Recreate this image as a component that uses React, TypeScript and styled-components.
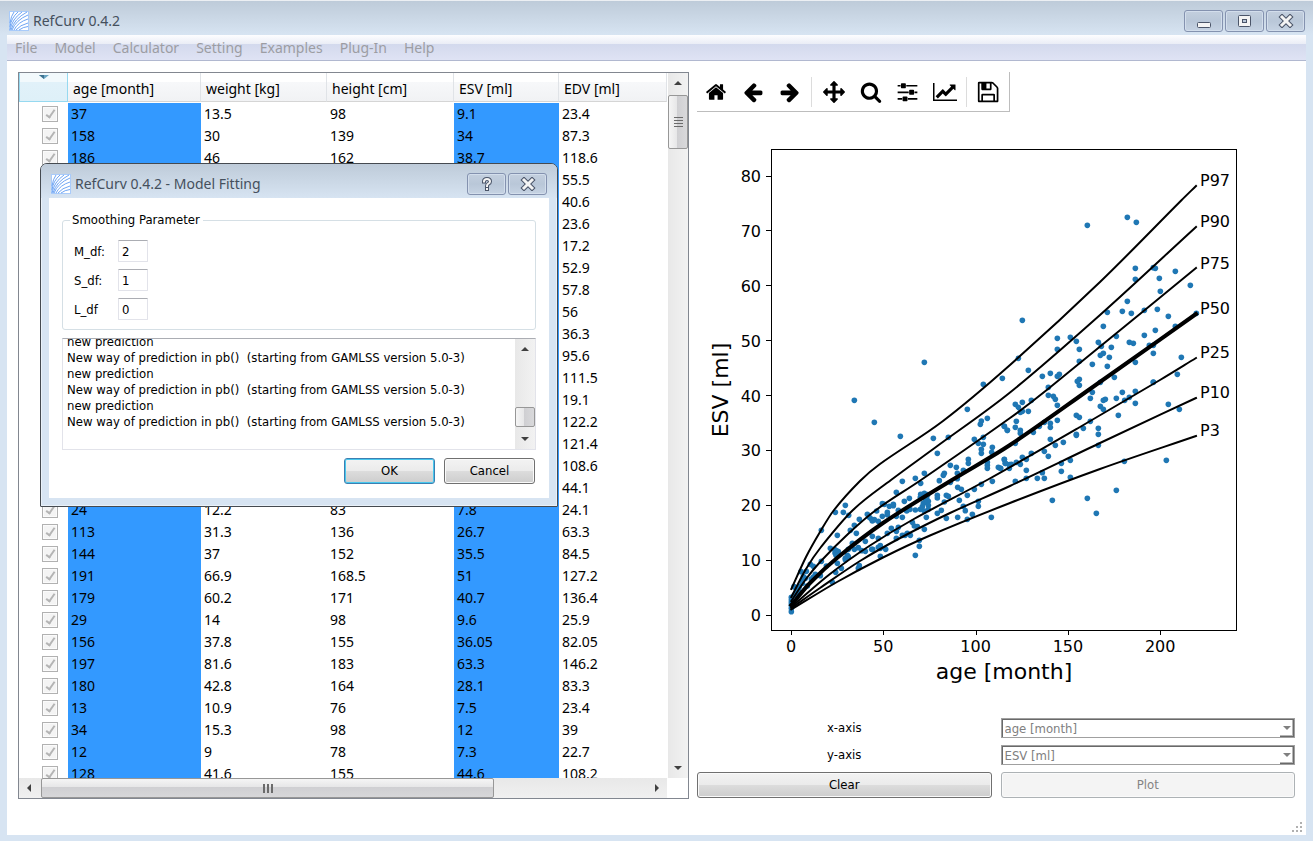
import React from "react";
import styled, { createGlobalStyle, css } from "styled-components";

const uiFont = `"Noto Sans", "Open Sans", sans-serif`;
const smallFont = `"DejaVu Sans Condensed", "Noto Sans", sans-serif`;

const GlobalStyle = createGlobalStyle`
  *, *::before, *::after { box-sizing: border-box; }
  body { margin: 0; background: #d7e4f2; font-family: ${uiFont}; font-size: 14px; color: #000; }
  button, input, select { font: inherit; color: inherit; margin: 0; }
`;

/* ---------- window frame ---------- */

const Window = styled.div`
  position: relative;
  display: flex;
  flex-direction: column;
  height: 100vh;
  min-height: 600px;
  padding: 0 7px 6px;
  background: #d7e4f2;
  border-top: 1px solid #eceff3;
  box-shadow: inset 0 1px 0 #b4bfcb;
  overflow: hidden;
`;

const TitleBar = styled.header<{ $dialog?: boolean }>`
  display: flex;
  align-items: center;
  flex: none;
  height: 34px;
  margin: 0 ${(p) => (p.$dialog ? -8 : -7)}px;
  padding: ${(p) => (p.$dialog ? "6px 10px 0 10px" : "6px 8px 0 9px")};
  gap: 4px;
  color: #45505d;
  background: linear-gradient(#becbd9, #d7e4f2);
  border-radius: ${(p) => (p.$dialog ? "6px 6px 0 0" : "0")};
`;

const TitleText = styled.h1`
  flex: 1;
  margin: 0;
  font-size: 14px;
  font-weight: 400;
  line-height: 20px;
`;

const FrameButtons = styled.div`
  display: flex;
  gap: 2px;
`;

const FrameButton = styled.button`
  display: flex;
  align-items: center;
  justify-content: center;
  width: 39px;
  height: 22px;
  padding: 0;
  border: 1px solid #8492af;
  border-radius: 3px;
  background: linear-gradient(#c3cfde, #b9c7d8 50%, #c6d3e3);
  box-shadow: inset 0 0 0 1px #d3deec;
`;

const MenuBar = styled.nav`
  display: flex;
  align-items: center;
  flex: none;
  gap: 17px;
  height: 26px;
  padding: 0 8px;
  background: linear-gradient(#fdfdff, #eaedf6 9px, #d3d9ed 9px, #dfe3f4);
  border-bottom: 1px solid #b1b8d0;
`;

const MenuItem = styled.button`
  padding: 0;
  border: 0;
  background: none;
  color: #9c9da3;
  line-height: 20px;
`;

const Client = styled.main`
  position: relative;
  display: grid;
  grid-template-columns: minmax(0, 671fr) minmax(0, 598fr);
  gap: 8px;
  flex: 1;
  min-height: 0;
  padding: 11px 11px 36px;
  background: #fff;
`;

const Grip = styled.svg`
  position: absolute;
  right: 2px;
  bottom: 2px;
`;

/* ---------- data table ---------- */

const TableFrame = styled.section`
  display: grid;
  grid-template-columns: minmax(0, 1fr) 20px;
  grid-template-rows: minmax(0, 1fr) 20px;
  min-height: 0;
  border: 1px solid #828790;
`;

const TableClip = styled.div`
  overflow: hidden;
  padding-right: 1px;
`;

const DataTable = styled.table`
  width: 100%;
  table-layout: fixed;
  border-collapse: separate;
  border-spacing: 0;
`;

const HeadCell = styled.th<{ $width?: number }>`
  width: ${(p) => (p.$width ? `${p.$width}px` : "auto")};
  height: 29px;
  padding: 3px 0 0 5px;
  text-align: left;
  font-weight: 400;
  line-height: 20px;
  white-space: nowrap;
  background: linear-gradient(#fff 9px, #f7f8fa 9px, #f1f2f4);
  border-right: 1px solid #e0e3e7;
  border-bottom: 1px solid #d5d5d5;
`;

const SortCell = styled(HeadCell)`
  padding: 0;
  vertical-align: top;
  background: linear-gradient(#f2f9fc 9px, #e1f1f9 9px, #def0f8);
  border: 1px solid #96d9f0;
  border-top: 0;
  svg { display: block; margin: 2px auto 0; }
`;

const SpacerCell = styled.td`
  height: 1px;
  padding: 0;
`;

const Cell = styled.td<{ $selected?: boolean }>`
  height: 22px;
  padding: 0 3px;
  line-height: 20px;
  background: ${(p) => (p.$selected ? "#3399ff" : "transparent")};
`;

const CheckCell = styled.td`
  height: 22px;
  padding: 0 0 0 23px;
  line-height: 0;
`;

const Tick = styled.input`
  appearance: none;
  display: block;
  position: relative;
  width: 16px;
  height: 16px;
  background: #f4f4f4;
  border: 1px solid #b1b1b1;
  box-shadow: inset 0 0 0 1px #fbfbfb;
  &::after {
    content: "";
    position: absolute;
    left: 5px;
    top: 1px;
    width: 5px;
    height: 10px;
    border: solid #b4b4b4;
    border-width: 0 2px 2px 0;
    transform: rotate(35deg);
  }
`;

/* ---------- scroll bars ---------- */

const VBar = styled.div`
  display: flex;
  flex-direction: column;
  background: linear-gradient(90deg, #e8e8e8, #f2f2f2);
`;

const HBar = styled.div`
  display: flex;
  background: linear-gradient(#e8e8e8, #f0f0f0);
  margin-right: 1px;
`;

const BarEnd = styled.button`
  display: flex;
  align-items: center;
  justify-content: center;
  flex: none;
  width: 20px;
  height: 20px;
  padding: 0;
  border: 0;
  background: none;
`;

const Track = styled.div<{ $row?: boolean; $end?: boolean }>`
  display: flex;
  flex: 1;
  flex-direction: ${(p) => (p.$row ? "row" : "column")};
  justify-content: ${(p) => (p.$end ? "flex-end" : "flex-start")};
  padding: ${(p) => (p.$row ? "0 2px" : "2px 0")};
`;

const Thumb = styled.div<{ $row?: boolean; $length: string }>`
  display: flex;
  align-items: center;
  justify-content: center;
  border: 1px solid #979797;
  border-radius: 2px;
  ${(p) =>
    p.$row
      ? css`
          width: ${p.$length};
          background: linear-gradient(#f5f5f5, #e6e6e7 45%, #cfcfd2 45%, #d7d7d9);
        `
      : css`
          height: ${p.$length};
          background: linear-gradient(90deg, #f5f5f5, #e6e6e7 45%, #cfcfd2 45%, #d9d9db);
        `}
`;

/* ---------- right pane ---------- */

const RightPane = styled.section`
  display: flex;
  flex-direction: column;
  min-height: 0;
`;

const Toolbar = styled.div`
  display: flex;
  align-items: center;
  align-self: flex-start;
  flex: none;
  height: 40px;
  padding-right: 2px;
  border: solid #bdbdbd;
  border-width: 0 1px 1px 0;
`;

const ToolButton = styled.button`
  display: flex;
  align-items: center;
  justify-content: center;
  width: 37px;
  height: 32px;
  padding: 0;
  border: 0;
  background: none;
`;

const Separator = styled.span`
  width: 7px;
  height: 30px;
  background: linear-gradient(90deg, transparent 3px, #dcdcdc 3px, #dcdcdc 4px, transparent 4px);
`;

const Chart = styled.svg`
  flex: 1;
  width: 100%;
  min-height: 0;
  font-family: "DejaVu Sans", sans-serif;
`;

const Controls = styled.form`
  display: grid;
  grid-template-columns: 1fr 1fr;
  column-gap: 9px;
  row-gap: 7px;
  flex: none;
  padding-bottom: 1px;
  font-family: ${smallFont};
  font-size: 13px;
`;

const FieldLabel = styled.label`
  align-self: center;
  text-align: center;
  line-height: 20px;
`;

const SelectBox = styled.div`
  position: relative;
  height: 20px;
`;

const Select = styled.select`
  appearance: none;
  display: block;
  width: 100%;
  height: 20px;
  padding: 0 20px 0 3px;
  border: 1px solid #a0a0a0;
  border-radius: 0;
  box-shadow: inset 1px 1px 0 #696969;
  background: #fff;
  color: #808080;
  opacity: 1;
`;

const SelectArrow = styled.span`
  position: absolute;
  top: 2px;
  right: 1px;
  display: flex;
  align-items: center;
  justify-content: center;
  width: 14px;
  height: 17px;
  background: #fff;
  border: solid #696969;
  border-width: 0 1px 1px 0;
  box-shadow: inset -1px -1px 0 #b5b5b5;
  pointer-events: none;
`;

const PushButton = styled.button<{ $primary?: boolean }>`
  height: 26px;
  padding: 0 8px;
  border: 1px solid ${(p) => (p.$primary ? "#3c7fb1" : "#707070")};
  border-radius: 3px;
  background: linear-gradient(#f3f3f3, #ebebeb 48%, #dddddd 48%, #cdcdcd);
  box-shadow: inset 0 0 0 1px ${(p) => (p.$primary ? "#48c8ee" : "#fafafa")};
  font-family: ${smallFont};
  font-size: 13px;
  line-height: 20px;
  &:disabled {
    border-color: #adb2b5;
    background: #f4f4f4;
    color: #838383;
  }
`;

/* ---------- dialog ---------- */

const Dialog = styled.section`
  position: absolute;
  left: 40px;
  top: 162px;
  width: 518px;
  padding: 0 8px 8px;
  border: 1px solid #454a50;
  border-radius: 7px 7px 1px 1px;
  background: #d7e4f2;
  box-shadow: inset 0 0 0 1px #e9f1f9;
`;

const DialogBody = styled.form`
  display: flex;
  flex-direction: column;
  gap: 8px;
  padding: 14px 13px 14px 13px;
  background: #fff;
  font-family: ${smallFont};
  font-size: 13px;
`;

const Group = styled.fieldset`
  margin: 0;
  padding: 12px 11px 9px;
  border: 1px solid #d5dfe5;
  border-radius: 3px;
`;

const GroupTitle = styled.legend`
  margin-left: -4px;
  padding: 0 3px 0 2px;
  line-height: 16px;
`;

const ParamRow = styled.div`
  display: grid;
  grid-template-columns: 44px 30px;
  align-items: center;
  height: 22px;
  margin-top: 7px;
  &:first-of-type { margin-top: 0; }
`;

const ParamInput = styled.input`
  width: 30px;
  height: 22px;
  padding: 0 3px;
  border: 1px solid #e2e3ea;
  border-top-color: #abadb3;
  border-radius: 1px;
  background: #fff;
`;

const LogBox = styled.div`
  display: grid;
  grid-template-columns: minmax(0, 1fr) 20px;
  height: 112px;
  border: 1px solid #e2e3ea;
  border-top-color: #abadb3;
`;

const LogLines = styled.div`
  display: flex;
  flex-direction: column;
  justify-content: flex-end;
  overflow: hidden;
  padding: 0 4px 19px;
`;

const LogLine = styled.p`
  flex: none;
  margin: 0;
  line-height: 16px;
  white-space: pre;
`;

const DialogButtons = styled.div`
  display: flex;
  justify-content: flex-end;
  gap: 9px;
  padding-right: 1px;
  ${PushButton} { width: 91px; }
`;

/* ---------- drawings ---------- */

function Logo() {
  return (
    <svg width="20" height="20" viewBox="0 0 20 20" aria-hidden="true">
      <rect x=".5" y=".5" width="19" height="19" fill="#fff" stroke="#a9cbfa" />
      <g fill="none" stroke="#6ea5f4" strokeWidth="1">
        <path d="M1 12Q2 5 5 1M1 16Q2 7 9 1M1 19Q3 8 13 1M2 19Q5 8 18 1M3 19Q7 9 19 4M5 19Q9 11 19 8M7 19Q11 14 19 12M10 19Q14 16 19 15.500" />
      </g>
    </svg>
  );
}

function Glyph({ d, width = 1792, size = 24 }: { d: string; width?: number; size?: number }) {
  return (
    <svg width={size} height={size} viewBox={`0 0 ${width} 1792`} aria-hidden="true">
      <path d={d} />
    </svg>
  );
}

const glyphs = {
  home: "M1472 992v480q0 26-19 45t-45 19h-384v-384h-256v384h-384q-26 0-45-19t-19-45v-480q0-1 .5-3t.5-3l575-474 575 474q1 2 1 6zm223-69l-62 74q-8 9-21 11h-3q-13 0-21-7l-692-577-692 577q-12 8-24 7-13-2-21-11l-62-74q-8-10-7-23.5t11-21.5l719-599q32-26 76-26t76 26l244 204v-195q0-14 9-23t23-9h192q14 0 23 9t9 23v408l219 182q10 8 11 21.5t-7 23.5z",
  back: "M1664 896v128q0 53-32.5 90.5t-84.5 37.5h-704l293 294q38 36 38 90t-38 90l-75 76q-37 37-90 37-52 0-91-37l-651-652q-37-37-37-90 0-52 37-91l651-650q38-38 91-38 52 0 90 38l75 74q38 38 38 91t-38 91l-293 293h704q52 0 84.5 37.5t32.5 90.5z",
  forward: "M1600 960q0 54-37 91l-651 651q-39 37-91 37-51 0-90-37l-75-75q-38-38-38-91t38-91l293-293h-704q-52 0-84.5-37.5t-32.5-90.5v-128q0-53 32.5-90.5t84.5-37.5h704l-293-294q-38-36-38-90t38-90l75-75q38-38 90-38 53 0 91 38l651 651q37 35 37 90z",
  move: "M1792 896q0 26-19 45l-256 256q-19 19-45 19t-45-19-19-45v-128h-384v384h128q26 0 45 19t19 45-19 45l-256 256q-19 19-45 19t-45-19l-256-256q-19-19-19-45t19-45 45-19h128v-384h-384v128q0 26-19 45t-45 19-45-19l-256-256q-19-19-19-45t19-45l256-256q19-19 45-19t45 19 19 45v128h384v-384h-128q-26 0-45-19t-19-45 19-45l256-256q19-19 45-19t45 19l256 256q19 19 19 45t-19 45-45 19h-128v384h384v-128q0-26 19-45t45-19 45 19l256 256q19 19 19 45z",
  search: "M1216 832q0-185-131.5-316.5t-316.5-131.5-316.5 131.5-131.5 316.5 131.5 316.5 316.5 131.5 316.5-131.5 131.5-316.5zm512 832q0 52-38 90t-90 38q-54 0-90-38l-343-342q-179 124-399 124-143 0-273.5-55.5t-225-150-150-225-55.5-273.5 55.5-273.5 150-225 225-150 273.5-55.5 273.5 55.5 225 150 150 225 55.5 273.5q0 220-124 399l343 343q37 37 37 90z",
  sliders: "M480 1408v128h-352v-128h352zm352-128q26 0 45 19t19 45v256q0 26-19 45t-45 19h-256q-26 0-45-19t-19-45v-256q0-26 19-45t45-19h256zm160-384v128h-864v-128h864zm-640-512v128h-224v-128h224zm1312 1024v128h-736v-128h736zm-960-1152q26 0 45 19t19 45v256q0 26-19 45t-45 19h-256q-26 0-45-19t-19-45v-256q0-26 19-45t45-19h256zm640 512q26 0 45 19t19 45v256q0 26-19 45t-45 19h-256q-26 0-45-19t-19-45v-256q0-26 19-45t45-19h256zm320 128v128h-224v-128h224zm0-512v128h-864v-128h864z",
  chart: "M2048 1536v128h-2048v-1536h128v1408h1920zm-128-1248v435q0 21-19.5 29.5t-35.5-7.5l-121-121-633 633q-10 10-23 10t-23-10l-233-233-416 416-192-192 585-585q10-10 23-10t23 10l233 233 464-464-121-121q-16-16-7.5-35.500t29.5-19.500h435q14 0 23 9t9 23z",
  save: "M384 1536h768v-384h-768v384zm896 0h128v-896q0-14-10-38.5t-20-34.5l-281-281q-10-10-34-20t-39-10v416q0 40-28 68t-68 28h-576q-40 0-68-28t-28-68v-416h-128v1280h128v-416q0-40 28-68t68-28h832q40 0 68 28t28 68v416zm-384-928v-320q0-13-9.5-22.5t-22.5-9.5h-192q-13 0-22.5 9.5t-9.5 22.5v320q0 13 9.5 22.5t22.5 9.5h192q13 0 22.5-9.5t9.5-22.5zm640 32v928q0 40-28 68t-68 28h-1344q-40 0-68-28t-28-68v-1344q0-40 28-68t68-28h928q40 0 88 20t76 48l280 280q28 28 48 76t20 88z",
};

const arrowShapes = {
  up: "M0 6L4 2L8 6Z",
  down: "M0 2L4 6L8 2Z",
  left: "M6 0L2 4L6 8Z",
  right: "M2 0L6 4L2 8Z",
};

function Arrow({ dir, color = "#404040" }: { dir: keyof typeof arrowShapes; color?: string }) {
  return (
    <svg width="8" height="8" viewBox="0 0 8 8" aria-hidden="true">
      <path d={arrowShapes[dir]} fill={color} />
    </svg>
  );
}

function CloseGlyph() {
  return (
    <svg width="16" height="14" viewBox="0 0 16 14" aria-hidden="true">
      <path d="M4 3L12 11M12 3L4 11" stroke="#4b5569" strokeWidth="5" strokeLinecap="square" />
      <path d="M4 3L12 11M12 3L4 11" stroke="#f4f4f4" strokeWidth="3" strokeLinecap="square" />
    </svg>
  );
}

/* ---------- table data ---------- */

const columns = [
  { name: "age [month]", width: 133, selected: true },
  { name: "weight [kg]", width: 126 },
  { name: "height [cm]", width: 127 },
  { name: "ESV [ml]", width: 105, selected: true },
  { name: "EDV [ml]" },
];

const rows = `37 13.5 98 9.1 23.4
158 30 139 34 87.3
186 46 162 38.7 118.6
- - - - 55.5
- - - - 40.6
- - - - 23.6
- - - - 17.2
- - - - 52.9
- - - - 57.8
- - - - 56
- - - - 36.3
- - - - 95.6
- - - - 111.5
- - - - 19.1
- - - - 122.2
- - - - 121.4
- - - - 108.6
- - - - 44.1
24 12.2 83 7.8 24.1
113 31.3 136 26.7 63.3
144 37 152 35.5 84.5
191 66.9 168.5 51 127.2
179 60.2 171 40.7 136.4
29 14 98 9.6 25.9
156 37.8 155 36.05 82.05
197 81.6 183 63.3 146.2
180 42.8 164 28.1 83.3
13 10.9 76 7.5 23.4
34 15.3 98 12 39
12 9 78 7.3 22.7
128 41.6 155 44.6 108.2`
  .split("\n")
  .map((line) => line.split(" ").map((v) => (v === "-" ? "" : v)));

/* ---------- chart data ---------- */

/* Each block lists its points in thirds of a unit, counted from the block's origin. */
const pointBlocks = [
  {
    x: 770,
    y: 480,
    pts: "397,4 452,10 508,2 541,7 562,-4 563,22 574,28 634,13 613,28 667,4 592,46 379,37 226,76 196,97 220,97 236,106 337,71 343,73 358,79 370,73 370,77 385,91 403,64 418,55 320,93 292,103 298,112 304,117 313,119 325,124 307,123 337,109 352,97 352,104 379,109 397,112 268,118 253,136 241,151 259,160 202,166 154,151 410,93 420,88 436,90 452,43 463,40 473,44 451,52 462,52 470,55 475,64 460,70 465,67 475,76 451,88 457,80 463,93 475,88 469,112 502,46 502,54 529,46 535,49 523,66 502,100 514,91 529,115 563,112 568,61 580,79 586,92 607,103 592,118 625,64 625,79 664,112 364,145 379,154 385,142 352,160 427,127 433,138 442,140 463,148 397,166 405,166 412,160 379,175 421,166 448,181 448,199 436,226 307,169 325,175 286,184 247,190 235,208 253,208 265,203 275,212 286,214 305,208 308,208 325,202 331,197 331,205 347,208 331,229 268,257 265,265 181,205 193,208 199,212 195,219 205,215 198,226 232,226 226,235 235,230 226,239 202,250 214,265 197,277 187,307 154,244 169,258 121,253 130,259 109,274 93,275 136,283 151,287 124,297 112,318 100,290 97,300 106,295 97,310 88,320 85,330 78,325 72,320 80,340 73,345 64,352 64,360 64,368 64,376 64,385 64,395 130,291",
  },
  {
    x: 770,
    y: 330,
    pts: "463,97 253,211 313,277 391,319 490,325 535,322 592,238 640,163 697,145 634,273 631,283 652,265 703,289 712,301 613,328 625,340 640,322 640,343 634,358 634,370 667,352 665,367 595,388 595,400 502,370 541,406 559,412 580,421 652,397 652,406 652,415 685,412 692,415 703,388 706,400 718,404 463,430 523,430 520,436 562,430 436,445",
  },
  {
    x: 1000,
    y: 200,
    pts: "382,52 409,67 262,76 406,205 460,203 466,205 406,238 478,235 526,214 481,274 571,256 67,361 382,304 322,337 367,334 394,340 433,331 472,328 505,349 526,379 589,340 310,379 172,415 211,412 229,424 172,448 55,475 85,511 127,529 151,520 172,529 178,523 145,562 238,448 238,484 295,427 304,439 334,442 349,409 388,427 400,430 433,406 466,391 310,460 301,466 277,493 328,472 322,499 343,532 406,487 448,436 460,436 460,460 544,472 532,523 460,547 238,538 232,544 238,556 301,547",
  },
  {
    x: 1000,
    y: 380,
    pts: "145,46 160,49 166,58 172,76 46,73 55,82 67,67 94,61 67,94 61,97 85,94 49,124 46,142 13,139 22,151 61,151 61,160 46,190 100,157 118,139 133,127 151,130 151,142 172,121 277,37 271,55 310,61 316,58 349,55 367,37 374,61 388,52 406,34 406,70 301,79 310,88 355,106 229,106 238,112 271,124 250,145 229,163 229,166 295,145 295,163 295,196 151,178 166,196 190,187 133,214 145,229 94,220 67,232 79,238 13,239 16,250 49,247 61,253 34,253 28,265 1,265 79,271 46,304 79,295 112,295 133,295 127,278 184,250 184,274 211,241 211,292 373,244 499,241 505,73 538,88 349,331 262,355 289,400 157,361 460,6",
  },
];

const points = pointBlocks.flatMap((block) =>
  block.pts.split(" ").map((pair) => {
    const [px, py] = pair.split(",").map(Number);
    return { x: block.x + px / 3, y: block.y + py / 3 };
  })
);

const curves: { name: string; labelY: number; bold?: boolean; pts: number[][] }[] = [
  { name: "P97", labelY: 186, pts: [[791.3, 589], [806, 557], [820, 532], [834, 510], [860, 481], [880, 464], [943, 421], [1010, 365], [1100, 282], [1181.7, 200], [1196, 186]] },
  { name: "P90", labelY: 227, pts: [[791.3, 597], [806, 569], [821, 547], [853, 510], [891, 480], [936, 447], [1010, 392.5], [1100, 315], [1196, 227]] },
  { name: "P75", labelY: 269, pts: [[791.3, 601], [806, 579], [821, 561], [848, 534], [876, 510], [921, 480], [1010, 418], [1048, 389], [1196, 268]] },
  { name: "P50", labelY: 314, bold: true, pts: [[791.3, 605], [810, 583], [837, 558], [883, 523], [952, 480], [1010, 445], [1090, 389], [1196, 314]] },
  { name: "P25", labelY: 358, pts: [[791.3, 607], [830, 574], [870, 545.5], [913, 519.5], [988, 479.5], [1080, 427], [1160, 380], [1196, 358]] },
  { name: "P10", labelY: 398, pts: [[791.3, 608], [820, 588], [860, 561], [903, 536.5], [950, 513], [1010, 486], [1100, 443], [1196, 398]] },
  { name: "P3", labelY: 436, pts: [[791.3, 609.5], [837, 582], [883, 557.5], [930, 535.5], [1010, 503], [1100, 469], [1196, 436]] },
];

/* Smooth curve through the given knots. */
function spline(pts: number[][]) {
  let d = `M${pts[0][0]} ${pts[0][1]}`;
  for (let i = 0; i < pts.length - 1; i++) {
    const p0 = pts[i - 1] || pts[i];
    const p1 = pts[i];
    const p2 = pts[i + 1];
    const p3 = pts[i + 2] || p2;
    const t = (p2[0] - p1[0]) / 3;
    const m1 = (p2[1] - p0[1]) / (p2[0] - p0[0]);
    const m2 = (p3[1] - p1[1]) / (p3[0] - p1[0]);
    d += `C${p1[0] + t} ${p1[1] + m1 * t} ${p2[0] - t} ${p2[1] - m2 * t} ${p2[0]} ${p2[1]}`;
  }
  return d;
}

const xTicks = [0, 50, 100, 150, 200];
const yTicks = [0, 10, 20, 30, 40, 50, 60, 70, 80];

function GrowthChart() {
  return (
    <Chart viewBox="697 112 598 606" role="img" aria-label="Percentile curves of ESV by age">
      <g fill="#1f77b4">
        {points.map((p, i) => (
          <circle key={i} cx={p.x} cy={p.y} r="2.8" />
        ))}
      </g>
      {curves.map((c) => (
        <path key={c.name} d={spline(c.pts)} fill="none" stroke="#000" strokeWidth={c.bold ? 4 : 2} strokeLinecap="square" />
      ))}
      <rect x="771.5" y="149.500" width="465" height="481" fill="none" stroke="#000" strokeWidth="1" />
      <g stroke="#000">
        {xTicks.map((v) => (
          <path key={v} d={`M${Math.round(791 + v * 1.846) + 0.5} 630v5`} />
        ))}
        {yTicks.map((v) => (
          <path key={v} d={`M771 ${Math.round(614.500 - v * 5.487) + 0.5}h-5`} />
        ))}
      </g>
      <g fontSize="16" textAnchor="middle">
        {xTicks.map((v) => (
          <text key={v} x={791 + v * 1.846} y="652">{v}</text>
        ))}
      </g>
      <g fontSize="16" textAnchor="end">
        {yTicks.map((v) => (
          <text key={v} x="761" y={621 - v * 5.487}>{v}</text>
        ))}
      </g>
      <g fontSize="16">
        {curves.map((c) => (
          <text key={c.name} x="1200" y={c.labelY}>{c.name}</text>
        ))}
      </g>
      <text x="1004" y="679" fontSize="22" textAnchor="middle">age [month]</text>
      <text transform="translate(728 390) rotate(-90)" fontSize="22" textAnchor="middle">ESV [ml]</text>
    </Chart>
  );
}

const logLines = [
  "new prediction",
  "New way of prediction in pb()  (starting from GAMLSS version 5.0-3)",
  "new prediction",
  "New way of prediction in pb()  (starting from GAMLSS version 5.0-3)",
  "new prediction",
  "New way of prediction in pb()  (starting from GAMLSS version 5.0-3)",
];

const params = [
  { id: "m-df", label: "M_df:", value: "2" },
  { id: "s-df", label: "S_df:", value: "1" },
  { id: "l-df", label: "L_df", value: "0" },
];

function FittingDialog() {
  return (
    <Dialog role="dialog" aria-label="Model Fitting">
      <TitleBar $dialog>
        <Logo />
        <TitleText as="h2">RefCurv 0.4.2 - Model Fitting</TitleText>
        <FrameButtons>
          <FrameButton aria-label="Help">
            <svg width="14" height="16" viewBox="0 0 14 16" fill="none" aria-hidden="true">
              <path d="M4 5.500Q4 3 7 3T10 5.500Q10 7 8.500 7.700T7 10M7 12.900V13" stroke="#4b5569" strokeWidth="4" strokeLinecap="square" />
              <path d="M4 5.500Q4 3 7 3T10 5.500Q10 7 8.500 7.700T7 10M7 12.900V13" stroke="#f4f4f4" strokeWidth="2" strokeLinecap="square" />
            </svg>
          </FrameButton>
          <FrameButton aria-label="Close dialog"><CloseGlyph /></FrameButton>
        </FrameButtons>
      </TitleBar>
      <DialogBody onSubmit={(e) => e.preventDefault()}>
        <Group>
          <GroupTitle>Smoothing Parameter</GroupTitle>
          {params.map((p) => (
            <ParamRow key={p.id}>
              <label htmlFor={p.id}>{p.label}</label>
              <ParamInput id={p.id} defaultValue={p.value} />
            </ParamRow>
          ))}
        </Group>
        <LogBox>
          <LogLines role="log">
            {logLines.map((line, i) => (
              <LogLine key={i}>{line}</LogLine>
            ))}
          </LogLines>
          <VBar>
            <BarEnd type="button" aria-label="Scroll log up"><Arrow dir="up" /></BarEnd>
            <Track $end><Thumb $length="20px" /></Track>
            <BarEnd type="button" aria-label="Scroll log down"><Arrow dir="down" /></BarEnd>
          </VBar>
        </LogBox>
        <DialogButtons>
          <PushButton $primary>OK</PushButton>
          <PushButton type="button">Cancel</PushButton>
        </DialogButtons>
      </DialogBody>
    </Dialog>
  );
}

function DataView() {
  return (
    <TableFrame>
      <TableClip>
        <DataTable>
          <thead>
            <tr>
              <SortCell $width={49} aria-label="Use row">
                <svg width="10" height="4" viewBox="0 0 10 4" aria-hidden="true">
                  <path d="M0 0H10L5 4Z" fill="#6aa5c3" />
                  <path d="M0 0H5V4Z" fill="#3f7390" />
                </svg>
              </SortCell>
              {columns.map((c) => (
                <HeadCell key={c.name} $width={c.width}>{c.name}</HeadCell>
              ))}
            </tr>
          </thead>
          <tbody>
            <tr><SpacerCell colSpan={6} /></tr>
            {rows.map((row, r) => (
              <tr key={r}>
                <CheckCell><Tick type="checkbox" defaultChecked disabled aria-label={`Row ${r + 1}`} /></CheckCell>
                {row.map((value, c) => (
                  <Cell key={c} $selected={columns[c].selected}>{value}</Cell>
                ))}
              </tr>
            ))}
          </tbody>
        </DataTable>
      </TableClip>
      <VBar>
        <BarEnd aria-label="Scroll up"><Arrow dir="up" /></BarEnd>
        <Track>
          <Thumb $length="54px">
            <svg width="9" height="10" viewBox="0 0 9 10" aria-hidden="true">
              <path d="M0 .5h9M0 3.500h9M0 6.500h9M0 9.500h9" stroke="#6b6b6b" />
            </svg>
          </Thumb>
        </Track>
        <BarEnd aria-label="Scroll down"><Arrow dir="down" /></BarEnd>
      </VBar>
      <HBar>
        <BarEnd aria-label="Scroll left"><Arrow dir="left" /></BarEnd>
        <Track $row>
          <Thumb $row $length="75%">
            <svg width="10" height="9" viewBox="0 0 10 9" aria-hidden="true">
              <path d="M1 0v9M5 0v9M9 0v9" stroke="#6b6b6b" strokeWidth="2" />
            </svg>
          </Thumb>
        </Track>
        <BarEnd aria-label="Scroll right"><Arrow dir="right" /></BarEnd>
      </HBar>
    </TableFrame>
  );
}

export default function App() {
  return (
    <>
      <GlobalStyle />
      <Window>
        <TitleBar>
          <Logo />
          <TitleText>RefCurv 0.4.2</TitleText>
          <FrameButtons>
            <FrameButton aria-label="Minimize">
              <svg width="14" height="14" viewBox="0 0 14 14" aria-hidden="true">
                <rect x=".5" y="8.500" width="13" height="5" rx="1" fill="#f4f4f4" stroke="#4b5569" />
              </svg>
            </FrameButton>
            <FrameButton aria-label="Maximize">
              <svg width="13" height="12" viewBox="0 0 13 12" aria-hidden="true">
                <rect x=".5" y=".5" width="12" height="11" rx="1" fill="#f4f4f4" stroke="#4b5569" />
                <rect x="4.500" y="4.500" width="4" height="3" fill="#b9c7d8" stroke="#4b5569" />
              </svg>
            </FrameButton>
            <FrameButton aria-label="Close"><CloseGlyph /></FrameButton>
          </FrameButtons>
        </TitleBar>
        <MenuBar>
          {["File", "Model", "Calculator", "Setting", "Examples", "Plug-In", "Help"].map((m) => (
            <MenuItem key={m} disabled>{m}</MenuItem>
          ))}
        </MenuBar>
        <Client>
          <DataView />
          <RightPane>
            <Toolbar>
              <ToolButton aria-label="Home"><Glyph d={glyphs.home} size={22} /></ToolButton>
              <ToolButton aria-label="Back"><Glyph d={glyphs.back} size={22} /></ToolButton>
              <ToolButton aria-label="Forward"><Glyph d={glyphs.forward} size={22} /></ToolButton>
              <Separator />
              <ToolButton aria-label="Pan"><Glyph d={glyphs.move} size={22} /></ToolButton>
              <ToolButton aria-label="Zoom"><Glyph d={glyphs.search} size={22} /></ToolButton>
              <ToolButton aria-label="Configure"><Glyph d={glyphs.sliders} size={23} /></ToolButton>
              <ToolButton aria-label="Edit curves"><Glyph d={glyphs.chart} width={2048} size={24} /></ToolButton>
              <Separator />
              <ToolButton aria-label="Save"><Glyph d={glyphs.save} width={1664} size={24} /></ToolButton>
            </Toolbar>
            <GrowthChart />
            <Controls onSubmit={(e) => e.preventDefault()}>
              <FieldLabel htmlFor="x-axis">x-axis</FieldLabel>
              <SelectBox>
                <Select id="x-axis" disabled><option>age [month]</option></Select>
                <SelectArrow><Arrow dir="down" color="#808080" /></SelectArrow>
              </SelectBox>
              <FieldLabel htmlFor="y-axis">y-axis</FieldLabel>
              <SelectBox>
                <Select id="y-axis" disabled><option>ESV [ml]</option></Select>
                <SelectArrow><Arrow dir="down" color="#808080" /></SelectArrow>
              </SelectBox>
              <PushButton type="button">Clear</PushButton>
              <PushButton disabled>Plot</PushButton>
            </Controls>
          </RightPane>
          <Grip width="12" height="12" viewBox="0 0 12 12" fill="#b0b0b0" aria-hidden="true">
            <path d="M8 1h2v2H8zM8 5h2v2H8zM8 9h2v2H8zM4 5h2v2H4zM4 9h2v2H4zM0 9h2v2H0z" />
          </Grip>
        </Client>
        <FittingDialog />
      </Window>
    </>
  );
}
